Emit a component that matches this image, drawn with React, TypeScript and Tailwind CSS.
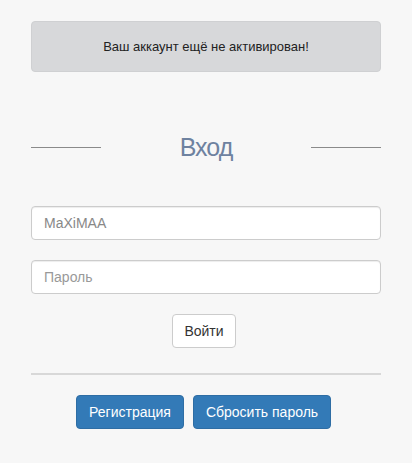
import { useState } from "react";

export default function App() {
  const [login, setLogin] = useState("MaXiMAA");
  const [password, setPassword] = useState("");

  return (
    <div
      className="min-h-[463px] w-full bg-[#f7f7f7] px-[31px] pt-[21px] pb-8 text-[#333]"
      style={{ fontFamily: '"Liberation Sans", Arial, sans-serif' }}
    >
      <div className="flex h-[51px] items-center justify-center rounded border border-[#cfd0d2] bg-[#d7d8da] text-[13px] text-[#222]">
        Ваш аккаунт ещё не активирован!
      </div>

      <div className="mt-[62px] flex items-center justify-between">
        <div className="h-px w-[70px] bg-[#8a8a8a]" />
        <h2 className="text-[25px] leading-[26px] tracking-[-1px] text-[#6e82a0]">Вход</h2>
        <div className="h-px w-[70px] bg-[#8a8a8a]" />
      </div>

      <form className="mt-[46px] flex flex-col" onSubmit={(e) => e.preventDefault()}>
        <input
          value={login}
          onChange={(e) => setLogin(e.target.value)}
          className="h-[34px] w-full rounded border border-[#ccc] bg-white px-3 text-[14px] text-[#888] shadow-[inset_0_1px_1px_rgba(0,0,0,0.075)] outline-none"
        />
        <input
          type="password"
          placeholder="Пароль"
          value={password}
          onChange={(e) => setPassword(e.target.value)}
          className="mt-[20px] h-[34px] w-full rounded border border-[#ccc] bg-white px-3 text-[14px] text-[#555] shadow-[inset_0_1px_1px_rgba(0,0,0,0.075)] outline-none placeholder:text-[#999]"
        />
        <div className="mt-[20px] flex justify-center pr-[4px]">
          <button
            type="submit"
            className="h-[34px] w-[64px] rounded border border-[#ccc] bg-white text-[14px] text-[#333]"
          >
            Войти
          </button>
        </div>
      </form>

      <div className="mt-[25px] h-[2px] w-full bg-[#d8d8d8]" />

      <div className="mt-[20px] flex justify-center gap-[9px] pr-[5px]">
        <button className="h-[34px] w-[108px] rounded border border-[#2e6da4] bg-[#337ab7] text-[14px] text-white">
          Регистрация
        </button>
        <button className="h-[34px] w-[138px] rounded border border-[#2e6da4] bg-[#337ab7] text-[14px] text-white">
          Сбросить пароль
        </button>
      </div>
    </div>
  );
}
